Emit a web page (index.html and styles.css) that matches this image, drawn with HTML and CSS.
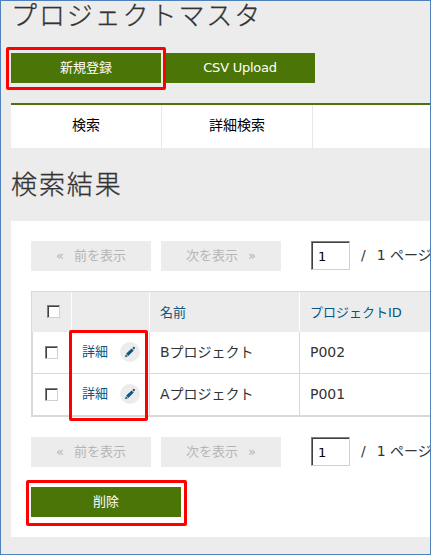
FILE: index.html
```html
<!DOCTYPE html>
<html lang="ja">
<head>
<meta charset="utf-8">
<title>プロジェクトマスタ</title>
<link rel="stylesheet" href="styles.css">
</head>
<body>
<svg class="defs" width="0" height="0"><symbol id="pencil" viewBox="0 0 20 20"><path d="M5 15.3l.9-3 2 2z"/><path d="M6.2 11.5l5.5-5 2 2-5.4 5.4z"/><path d="M12.4 6l1-1q.7-.4 1.3.2t.2 1.3l-1 1z"/></symbol></svg>
<main class="page">
  <h1 class="title">プロジェクトマスタ</h1>
  <div class="actions">
    <div class="marked marked-new"><button class="btn">新規登録</button></div>
    <button class="btn btn-latin">CSV Upload</button>
  </div>
  <nav class="tabs"><a class="tab">検索</a><a class="tab">詳細検索</a></nav>
  <h2 class="title subtitle">検索結果</h2>
  <section class="panel">
    <div class="pager">
      <span class="page-btn prev"><span class="arrow">«</span>前を表示</span>
      <span class="page-btn">次を表示<span class="arrow">»</span></span>
      <input class="page-input" value="1"><span class="page-total"><span class="slash">/</span>1 ページ</span>
    </div>
    <table class="grid">
      <thead><tr><th class="c-check"><i class="check"></i></th><th class="c-detail"></th><th class="c-name">名前</th><th class="c-id">プロジェクトID</th></tr></thead>
      <tbody>
        <tr><td><i class="check"></i></td><td class="detail"><div class="link">詳細<svg class="edit"><use href="#pencil"/></svg></div></td><td class="name">Bプロジェクト</td><td class="code">P002</td></tr>
        <tr><td><i class="check"></i></td><td class="detail"><div class="link">詳細<svg class="edit"><use href="#pencil"/></svg></div></td><td class="name">Aプロジェクト</td><td class="code">P001</td></tr>
      </tbody>
    </table>
    <div class="pager">
      <span class="page-btn prev"><span class="arrow">«</span>前を表示</span>
      <span class="page-btn">次を表示<span class="arrow">»</span></span>
      <input class="page-input" value="1"><span class="page-total"><span class="slash">/</span>1 ページ</span>
    </div>
    <div class="marked marked-delete"><button class="btn">削除</button></div>
    <div class="detail-mark"></div>
  </section>
</main>
</body>
</html>
```
FILE: styles.css
```css
* { box-sizing: border-box; }
body { margin: 0; overflow: hidden; }
.defs { position: absolute; }
.page {
  position: relative;
  width: 431px;
  height: 555px;
  padding-left: 10px;
  border: 1px solid #4f81bd;
  background: #ececec;
  color: #333;
  font-family: "DejaVu Sans", "Noto Sans CJK JP", sans-serif;
  font-size: 14px;
  overflow: hidden;
}
.title {
  height: 52px;
  margin: 0;
  font-family: "Noto Sans CJK JP", sans-serif;
  font-size: 26px;
  font-weight: 300;
  -webkit-text-stroke: .3px #333;
  letter-spacing: 1.9px;
  line-height: 26px;
  white-space: nowrap;
}
.actions { display: flex; gap: 4px; height: 50px; }
.btn {
  display: block;
  width: 150px;
  height: 30px;
  padding: 0;
  border: 0;
  background: #4b7607;
  color: #fff;
  font: 13px/30px "DejaVu Sans", "Noto Sans CJK JP", sans-serif;
}
.btn-latin { letter-spacing: -.25px; }
.marked { position: relative; width: 150px; height: 30px; }
.marked::after {
  content: "";
  position: absolute;
  border: 3px solid #f00;
  border-radius: 2px;
}
.marked-new { z-index: 1; }
.marked-new::after { inset: -6px -5px -7px; box-shadow: inset 0 0 0 1px #ececec; }
.marked-delete::after { inset: -7px -6px -9px -5px; }
.tabs { display: flex; height: 45px; border-top: 2px solid #4b7607; background: #fff; }
.tab {
  width: 151px;
  border-right: 1px solid #e8e8e8;
  color: #000;
  line-height: 41px;
  text-align: center;
}
.subtitle { height: 73px; padding-top: 22px; }
.panel {
  position: relative;
  height: 316px;
  padding: 20px 0 0 20px;
  background: #fff;
}
.pager { display: flex; width: 460px; height: 30px; }
.page-btn {
  flex: none;
  width: 120px;
  margin-right: 10px;
  padding-left: 25px;
  background: #ececec;
  color: #b5b5b5;
  font-size: 13px;
  line-height: 29px;
  white-space: nowrap;
}
.page-btn.prev { padding-left: 24px; text-indent: -9px; }
.arrow:first-child { margin-right: 10px; text-indent: 0; }
.arrow:last-child { margin-left: 10px; }
.page-input {
  width: 39px;
  height: 29px;
  margin: 0 11px 0 20px;
  padding: 2px 0 0 6px;
  border: 1px solid;
  border-color: #808080 #d4d0c8 #d4d0c8 #808080;
  border-radius: 0;
  background: #fff;
  box-shadow: inset 1px 1px #404040;
  color: #000;
  font: 13px "DejaVu Sans", sans-serif;
}
.page-total { flex: none; line-height: 29px; font-size: 14px; white-space: nowrap; }
.slash { margin-right: 11px; }
.grid {
  width: 469px;
  margin: 20px 0;
  border-top: 1px solid #d9d9d9;
  border-bottom: 1px solid #d9d9d9;
  border-left: 1px solid #d9d9d9;
  border-spacing: 0;
  table-layout: fixed;
}
.grid th {
  height: 40px;
  padding: 0 0 2px 10px;
  border-right: 1px solid #fff;
  background: #ececec;
  color: #0b5581;
  font-size: 13px;
  font-weight: 400;
  text-align: left;
}
.grid td {
  height: 42px;
  padding: 0 0 1px 10px;
  border-right: 1px solid #d9d9d9;
  border-bottom: 1px solid #d9d9d9;
}
.grid .name { padding-bottom: 3px; }
.grid td:first-child { border-left: 1px solid #d9d9d9; padding-left: 12px; }
.grid .c-check { width: 40px; padding-left: 15px; }
.c-detail { width: 78px; }
.c-name { width: 150px; }
.check {
  display: block;
  width: 13px;
  height: 13px;
  border: 1px solid;
  border-color: #808080 #d4d0c8 #d4d0c8 #808080;
  background: #fff;
  box-shadow: inset 1px 1px #404040;
}
.link { display: flex; align-items: center; color: #0b5581; font-size: 13px; line-height: 18px; }
.edit { width: 20px; height: 20px; margin-left: 12px; border-radius: 50%; background: #ececec; fill: #0b5581; }
.marked-delete { margin-top: 20px; }
.detail-mark {
  position: absolute;
  top: 109px;
  left: 58px;
  width: 79px;
  height: 91px;
  border: 3px solid #f00;
  border-radius: 2px;
}
```
